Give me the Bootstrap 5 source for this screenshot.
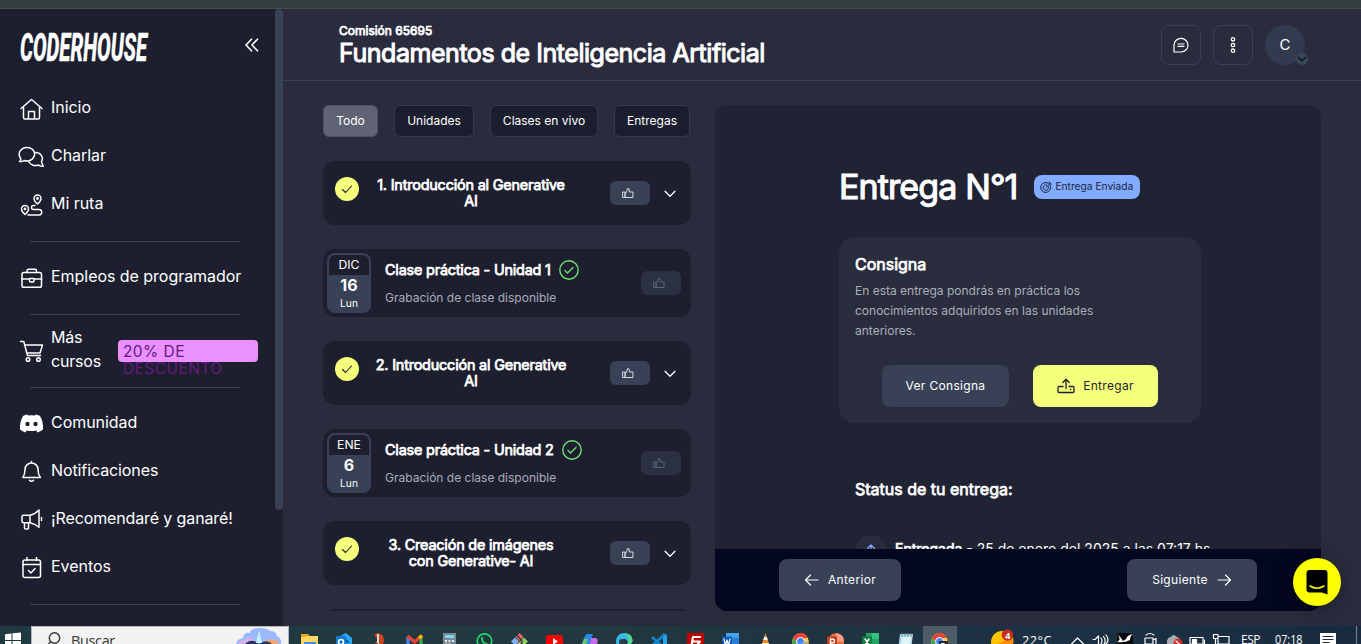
<!DOCTYPE html>
<html lang="es">
<head>
<meta charset="utf-8">
<meta name="viewport" content="width=device-width, initial-scale=1">
<title>Fundamentos de Inteligencia Artificial</title>
<link href="https://cdn.jsdelivr.net/npm/bootstrap@5.3.0/dist/css/bootstrap.min.css" rel="stylesheet">
<style>
:root{--ink:#1d1f2f;--bg:#2a2c3e;--slate:#384156;--lime:#f4ff7b;--line:#34435a}
body{width:1361px;height:644px;overflow:hidden;background:var(--bg);color:#fff;font-family:Inter,"Liberation Sans",sans-serif;font-size:12px}
svg{display:block;flex:none;fill:none;stroke:currentColor;stroke-linecap:round;stroke-linejoin:round}
svg[stroke="none"]{stroke:none}
svg[stroke-linecap="butt"]{stroke-linecap:butt}
.topstrip{height:9px;background:#363f3f;border-bottom:1px solid #4a4c48}
.app{height:617px}
.side{width:283px;background:var(--ink)}
.side-body{width:275px}
.side-top{height:75px;padding:21px 16px 0 20px}
.side-item{height:48px;padding-left:18px;font-size:16px;line-height:24px}
.side-item svg{margin-top:2px;margin-right:7px}
.side-item span{letter-spacing:-.04px;margin-top:-2px}
.side hr{margin:13px 35px 11px 30px;border:0;height:1px;background:#3a4157;opacity:1}
.scroller{width:8px;height:501px;border-radius:4px;background:#384156}
.promo{width:140px;height:22px;margin-left:17px;margin-top:1px;padding:3px 5px 0;border-radius:4px;background:#ea90ff;color:#64197d;font-size:15.5px;line-height:17px;letter-spacing:.45px}
.fat{font-weight:400;-webkit-text-stroke:.75px currentColor}
.head{height:72px;padding:0 53px 0 56px;border-bottom:1px solid var(--line)}
.head-copy{padding-top:15px}
.head-copy p{font-size:12px;line-height:14px}
.head-copy h1{font-size:25px;line-height:30px;letter-spacing:-.46px;-webkit-text-stroke-width:1px}
.sqbtn{width:40px;height:40px;border:1px solid var(--line);border-radius:8px}
.avatar-c{width:40px;height:40px;border-radius:50%;background:#323a50;font-size:15px}
.avatar-c i{position:absolute;left:31px;top:28px;width:12px;height:12px;border-radius:50%;background:#384659;color:#10131f}
.content{padding:24px 40px 0}
.left{width:368px;height:506px}
.tab-b{height:32px;border:1px solid #303c52;border-radius:6px;background:#1b1e2e;color:#fff;font-size:12px;padding:0;margin-right:16px}
.tab-b.on{background:#606373;border-color:#4a5468}
.unit{height:64px;border-radius:12px;background:var(--ink);margin-bottom:24px;padding:16px 15px 0 12px;flex:none}
.unit h2{font-size:14.4px;line-height:16px;width:224px;text-align:center;letter-spacing:-.18px}
.okdot{width:24px;height:24px;border-radius:50%;background:var(--lime);color:#1d1f2f}
.thumb{width:40px;height:24px;border-radius:6px;background:var(--slate);color:#d5d8df;padding:6px 0 0 12px}
.thumb.off{background:#2b3042;color:#5d6272}
.chev{margin:13px 0 0 14px}
.lesson{height:68px;border-radius:12px;background:var(--ink);margin-bottom:24px;padding:4px 10px 0 4px;flex:none}
.datebox{width:44px;height:60px;border:2px solid var(--slate);border-radius:8px;background:var(--slate);text-align:center;overflow:hidden}
.datebox b{display:block;height:20px;line-height:20px;background:#1d1f2f;border-radius:6px 6px 0 0;font-weight:400;font-size:12.2px}
.datebox strong{display:block;font-size:16px;line-height:20px;height:22px;font-weight:700}
.datebox em{display:block;font-style:normal;font-size:10.2px;line-height:13px}
.lesson h2{font-size:14.4px;line-height:20px;letter-spacing:-.18px}
.muted{color:#a9adba}
.lesson .muted{line-height:19px}
.panel{width:606px;height:506px;border-radius:12px;background:#202333;overflow:hidden}
.panel-scroll{height:444px;padding:62px 110px 0 124px;overflow:hidden}
.panel-scroll h1{font-size:34px;line-height:40px;letter-spacing:-.88px;-webkit-text-stroke-width:1.1px}
.tag-sent{width:106px;height:24px;border-radius:8px;background:#82acff;color:#1b2140;font-size:10.2px;padding-left:6px}
.brief{height:186px;border-radius:16px;background:#2a2d3d;margin-top:30px;padding:16px;}
.brief h2,.status-t{font-size:16px;line-height:22px}
.brief p{font-size:12px;line-height:20px}
.act{height:42px;border:0;border-radius:8px;background:#384156;color:#fff;font-size:12px;letter-spacing:.32px;padding:0}
.act.lime{background:var(--lime);color:#1d1f2f}
.up{width:32px;height:32px;border-radius:50%;background:#292c3c;color:#8aa8ff}
.foot{height:62px;padding:10px 64px 0;background:#040720}
.chat{position:absolute;left:1293px;top:558px;width:48px;height:48px;border-radius:50%;background:#fbff00;box-shadow:0 1px 6px rgba(0,0,0,.1),0 2px 24px rgba(0,0,0,.25)}
.taskb{height:18px;overflow:hidden;background:linear-gradient(90deg,#1f3a40 0,#22383e 45%,#1d3144 75%,#192c3f 100%);font-family:"Open Sans","Noto Sans",sans-serif}
.winbtn{width:31px}
.searchb{width:258px;height:30px;background:#f2f2f2;border:1px solid #b5b9ba;color:#333;font-size:14.4px}
.tcell{width:35.1px;height:18px;padding:6.5px 0 0 9.5px}
.tcell.on{width:34px;background:#4d5c66;padding-left:8px}
.tray{width:403px}
.tray svg{position:absolute;left:0;top:0}
</style>
</head>
<body class="d-flex flex-column">
<div class="topstrip flex-shrink-0"></div>
<div class="app d-flex flex-shrink-0">
  <aside class="side d-flex flex-shrink-0">
    <div class="side-body overflow-hidden">
      <div class="side-top d-flex justify-content-between">
        <svg width="150" height="40" viewBox="0 0 150 40"><text x="0" y="30.500" textLength="127" lengthAdjust="spacingAndGlyphs" font-family="Roboto" font-weight="800" font-style="italic" font-size="38.500" fill="#fff" stroke="#fff" stroke-width=".4">CODERHOUSE</text></svg>
        <svg class="mt-2" width="14" height="14" viewBox="0 0 14 14" stroke-width="1.6"><path d="M6.500 1.200 1 7l5.500 5.800M12.500 1.200 7 7l5.500 5.800"/></svg>
      </div>
      <div class="side-item d-flex align-items-center"><svg width="26" height="26" viewBox="0 0 26 26" stroke-width="1.500"><path d="M3 12.500 13.500 3.500 24 12.500M5.500 11v10.500q0 1.500 1.500 1.500h13q1.500 0 1.500-1.500V11M10.500 23v-7.500h6V23"/></svg><span>Inicio</span></div>
      <div class="side-item d-flex align-items-center"><svg width="26" height="26" viewBox="0 0 26 26" stroke-width="1.500"><path d="M1.500 17.500c1.500-1 1.500-2 1-3C-1 9 3 3.500 9 3.500s9.500 5.500 6.500 10c-2 3-6 4-9.500 3-1 .8-2.500 1.200-4.500 1zM17.500 8.500c5 0 8.500 4.500 6 9 .3 2 .5 3 2 4.500-2 .5-4 0-5-1-4 1.500-8 0-9.500-3"/></svg><span>Charlar</span></div>
      <div class="side-item d-flex align-items-center"><svg width="26" height="26" viewBox="0 0 26 26" stroke-width="1.400"><path d="M19.500 12s-3.500-3-3.500-5.500a3.500 3.500 0 0 1 7 0c0 2.500-3.500 5.500-3.500 5.500zM7 22.500s-3.500-3-3.500-5.500a3.500 3.500 0 0 1 7 0c0 2.500-3.500 5.500-3.500 5.500zM17 13.500h-1.500a2 2 0 0 0 0 4h5.500a2.700 2.700 0 0 1 0 5.500H10"/><circle cx="19.500" cy="6.500" r=".7"/><circle cx="7" cy="17" r=".7"/></svg><span>Mi ruta</span></div>
      <hr>
      <div class="side-item d-flex align-items-center"><svg width="26" height="26" viewBox="0 0 26 26" stroke-width="1.500"><rect x="4" y="7.500" width="19.500" height="14.800" rx="1.800"/><path d="M9 7.500V5.800q0-1.500 1.500-1.500h6.500q1.500 0 1.500 1.500v1.700M4 14h7.500M16 14h7.500M11.500 13.500h4.500v2.500q0 1-1 1h-2.500q-1 0-1-1z"/></svg><span>Empleos de programador</span></div>
      <hr>
      <div class="side-item d-flex align-items-center"><svg width="26" height="26" viewBox="0 0 26 26" stroke-width="1.500"><path d="M2.500 3.500h3.300l3.700 14h13M7 7h17.500l-2.500 8H9"/><circle cx="10" cy="21.500" r="1.800"/><circle cx="20.500" cy="21.500" r="1.800"/></svg><span style="letter-spacing:-.2px">Más<br>cursos</span><div class="promo">20% DE DESCUENTO</div></div>
      <hr>
      <div class="side-item d-flex align-items-center"><svg width="26" height="26" viewBox="0 0 26 26" stroke="none"><path fill="#fff" fill-rule="evenodd" d="M9.500 3.500 10 4.500q3.500-.6 7 0l.5-1q2.500.4 4.500 1.600 3.500 5.500 3 13.500-2.500 2-5.500 2.800l-1.200-2q-4.800 1.300-9.600 0l-1.200 2Q4.500 20.600 2 18.600 1.500 11 5 5.100q2-1.200 4.500-1.600zM9.500 10.700a2.100 2.300 0 1 0 .01 0zM17.500 10.700a2.100 2.300 0 1 0 .01 0z"/></svg><span>Comunidad</span></div>
      <div class="side-item d-flex align-items-center"><svg width="26" height="26" viewBox="0 0 26 26" stroke-width="1.500"><path d="M13.500 2.500v1.500M4.800 18.500h17.600c-2-2.500-2.400-4-2.400-8a6.500 6.500 0 0 0-13 0c0 4-.4 5.500-2.200 8zM11.500 21.300q2 2 4 0"/></svg><span style="letter-spacing:-.1px">Notificaciones</span></div>
      <div class="side-item d-flex align-items-center"><svg width="26" height="26" viewBox="0 0 26 26" stroke-width="1.500"><path d="M12 8.200H5.500Q4 8.200 4 9.700v4.600q0 1.500 1.500 1.500H12q5 1 9 4.500V3q-4 4.200-9 5.200zM12 8.200v7.600M6.500 15.800V21q0 1 1 1h2q1 0 1-1v-5M23.500 10.500v3"/></svg><span style="letter-spacing:-.12px">¡Recomendaré y ganaré!</span></div>
      <div class="side-item d-flex align-items-center"><svg width="26" height="26" viewBox="0 0 26 26" stroke-width="1.500"><rect x="5" y="5" width="17.500" height="17.500" rx="2"/><path d="M5 9.500h17.500M9 2.500v3M18.500 2.500v3M10.500 15.500l2.500 2.500 4-4.500"/></svg><span>Eventos</span></div>
      <hr>
    </div>
    <div class="scroller"></div>
  </aside>
  <main class="flex-grow-1">
    <header class="head d-flex justify-content-between">
      <div class="head-copy"><p class="fat m-0">Comisión 65695</p><h1 class="fat m-0">Fundamentos de Inteligencia Artificial</h1></div>
      <div class="d-flex pt-3" style="gap:12px;padding-right:3px">
        <div class="sqbtn d-flex align-items-center justify-content-center"><svg width="16" height="16" viewBox="0 0 16 16" stroke-width="1.200"><path d="M1 15V8a7 6.800 0 1 1 7 7zM5 7h6M5 9.300h6"/></svg></div>
        <div class="sqbtn d-flex align-items-center justify-content-center"><svg width="6" height="18" viewBox="0 0 6 18" stroke-width="1.300"><circle cx="3" cy="3.300" r="1.700"/><circle cx="3" cy="9" r="1.700"/><circle cx="3" cy="14.700" r="1.700"/></svg></div>
        <div class="avatar-c position-relative d-flex align-items-center justify-content-center">C<i><svg width="12" height="12" viewBox="0 0 12 12" stroke-width="1.500"><path d="M2.500 4.500 6 7.800l3.500-3.300"/></svg></i></div>
      </div>
    </header>
    <div class="content d-flex justify-content-between">
      <section class="left d-flex flex-column overflow-hidden">
        <div class="d-flex mb-4 flex-shrink-0">
          <button class="tab-b on" style="width:55px">Todo</button><button class="tab-b" style="width:80px">Unidades</button><button class="tab-b" style="width:108px">Clases en vivo</button><button class="tab-b m-0" style="width:76px">Entregas</button>
        </div>
        <article class="unit d-flex"><div class="okdot d-flex align-items-center justify-content-center"><svg width="12" height="10" viewBox="0 0 12 10" stroke-width="1.100"><path d="M1.500 5.500 4.500 8.500 10.500 2"/></svg></div><h2 class="fat m-0">1. Introducción al Generative<br>AI</h2><div class="thumb mt-1 ms-auto"><svg width="12" height="12" viewBox="0 0 12 12" stroke-width="1"><path d="M1 5h2v5.500H1zM3.500 5.500h1L5.500 1.500q1.800-.3 1.800 1.500v2h3.700V10.500H3.500z"/></svg></div><svg class="chev" width="12" height="8" viewBox="0 0 12 8" stroke-width="1.300"><path d="M1 1.200l5 5L11 1.200"/></svg></article>
        <article class="lesson d-flex"><div class="datebox"><b>DIC</b><strong>16</strong><em>Lun</em></div><div style="margin:7px 0 0 14px"><h2 class="fat m-0 d-flex align-items-center">Clase práctica - Unidad 1<svg style="margin-left:8px;color:#6de06f" width="20" height="20" viewBox="0 0 20 20" stroke-width="1.400"><circle cx="10" cy="10" r="9.200"/><path d="M6 10.500 8.500 13 14 7.500"/></svg></h2><div class="muted mt-2">Grabación de clase disponible</div></div><div class="thumb off ms-auto" style="margin-top:18px"><svg width="12" height="12" viewBox="0 0 12 12" stroke-width="1"><path d="M1 5h2v5.500H1zM3.500 5.500h1L5.500 1.500q1.800-.3 1.800 1.500v2h3.700V10.500H3.500z"/></svg></div></article>
        <article class="unit d-flex"><div class="okdot d-flex align-items-center justify-content-center"><svg width="12" height="10" viewBox="0 0 12 10" stroke-width="1.100"><path d="M1.500 5.500 4.500 8.500 10.500 2"/></svg></div><h2 class="fat m-0">2. Introducción al Generative<br>AI</h2><div class="thumb mt-1 ms-auto"><svg width="12" height="12" viewBox="0 0 12 12" stroke-width="1"><path d="M1 5h2v5.500H1zM3.500 5.500h1L5.500 1.500q1.800-.3 1.800 1.500v2h3.700V10.500H3.500z"/></svg></div><svg class="chev" width="12" height="8" viewBox="0 0 12 8" stroke-width="1.300"><path d="M1 1.200l5 5L11 1.200"/></svg></article>
        <article class="lesson d-flex"><div class="datebox"><b>ENE</b><strong>6</strong><em>Lun</em></div><div style="margin:7px 0 0 14px"><h2 class="fat m-0 d-flex align-items-center">Clase práctica - Unidad 2<svg style="margin-left:8px;color:#6de06f" width="20" height="20" viewBox="0 0 20 20" stroke-width="1.400"><circle cx="10" cy="10" r="9.200"/><path d="M6 10.500 8.500 13 14 7.500"/></svg></h2><div class="muted mt-2">Grabación de clase disponible</div></div><div class="thumb off ms-auto" style="margin-top:18px"><svg width="12" height="12" viewBox="0 0 12 12" stroke-width="1"><path d="M1 5h2v5.500H1zM3.500 5.500h1L5.500 1.500q1.800-.3 1.800 1.500v2h3.700V10.500H3.500z"/></svg></div></article>
        <article class="unit d-flex"><div class="okdot d-flex align-items-center justify-content-center"><svg width="12" height="10" viewBox="0 0 12 10" stroke-width="1.100"><path d="M1.500 5.500 4.500 8.500 10.500 2"/></svg></div><h2 class="fat m-0">3. Creación de imágenes<br>con Generative- AI</h2><div class="thumb mt-1 ms-auto"><svg width="12" height="12" viewBox="0 0 12 12" stroke-width="1"><path d="M1 5h2v5.500H1zM3.500 5.500h1L5.500 1.500q1.800-.3 1.800 1.500v2h3.700V10.500H3.500z"/></svg></div><svg class="chev" width="12" height="8" viewBox="0 0 12 8" stroke-width="1.300"><path d="M1 1.200l5 5L11 1.200"/></svg></article>
        <article class="lesson"></article>
      </section>
      <section class="panel">
        <div class="panel-scroll">
          <div class="d-flex align-items-center"><h1 class="fat m-0">Entrega N°1</h1><div class="tag-sent d-flex align-items-center" style="margin-left:17px"><svg width="12" height="12" viewBox="0 0 12 12" stroke-width="1" style="margin-right:3px"><path d="M10.300 4.500A5 5 0 1 1 8 2M8.300 5.500A2.700 2.700 0 1 1 6.700 4M6 6.500 10 2.500M9.300 1v2h2"/></svg>Entrega Enviada</div></div>
          <div class="brief" style="width:362px"><h2 class="fat m-0">Consigna</h2><p class="muted m-0" style="padding-top:6px">En esta entrega pondrás en práctica los<br>conocimientos adquiridos en las unidades<br>anteriores.</p>
            <div class="d-flex" style="gap:24px;margin:24px 0 0 27px"><button class="act" style="width:127px">Ver Consigna</button><button class="act lime d-flex align-items-center justify-content-center" style="width:125px"><svg width="18" height="16" viewBox="0 0 18 16" stroke-width="1.300" style="margin-right:8px"><path d="M9 10.500V1.500M5.800 4.500 9 1.300l3.200 3.200M6 8.500H2q-1 0-1 1v4q0 1 1 1h14q1 0 1-1v-4q0-1-1-1h-4M13.500 11.500h.3"/></svg>Entregar</button></div></div>
          <h2 class="status-t fat" style="margin:55px 0 0 16px">Status de tu entrega:</h2>
          <div class="d-flex" style="margin:35px 0 0 16px"><div class="up d-flex justify-content-center"><svg style="margin-top:9px" width="10" height="12" viewBox="0 0 10 12" stroke-width="1.200"><path d="M5 11V1M1.500 4.500 5 1l3.500 3.500"/></svg></div><div class="text-nowrap" style="margin:4px 0 0 8px;font-size:14px;line-height:20px"><span class="fat">Entregada</span> - 25 de enero del 2025 a las 07:17 hs</div></div>
        </div>
        <div class="foot d-flex justify-content-between">
          <button class="act d-flex align-items-center justify-content-center" style="width:122px"><svg style="margin-right:9px" width="15" height="14" viewBox="0 0 15 14" stroke-width="1.200"><path d="M14 7H1.500M6.500 2 1.500 7l5 5"/></svg>Anterior</button>
          <button class="act d-flex align-items-center justify-content-center" style="width:130px"><span>Siguiente</span><svg style="margin-left:9px" width="15" height="14" viewBox="0 0 15 14" stroke-width="1.200"><path d="M1 7h12.500M8.500 2l5 5-5 5"/></svg></button>
        </div>
      </section>
    </div>
  </main>
</div>
<div class="chat"><svg width="48" height="48" viewBox="0 0 48 48" stroke="none"><path fill="#000" d="M16.500 12h15q3 0 3 3v21.500l-5.500-2h-12.500q-3 0-3-3V15q0-3 3-3z"/><path fill="none" stroke="#fbff00" stroke-width="1.500" d="M17 28q7 4.500 14 0"/></svg></div>
<footer class="taskb d-flex flex-shrink-0">
  <div class="winbtn flex-shrink-0"><svg width="31" height="18" viewBox="0 0 31 18" stroke="none" fill="#fff"><path fill="#fff" d="M5 8.300 11.500 7.500V14H5zM12.500 7.300 21 6.500V14h-8.500zM5 15h6.500v3H5zM12.500 15H21v3h-8.500z"/></svg></div>
  <div class="searchb d-flex flex-shrink-0"><svg width="39" height="18" viewBox="0 0 39 18" stroke-width="1.400"><circle cx="22.500" cy="11" r="5.200"/><path d="M18.500 15 16 18"/></svg><span style="line-height:20px;padding-top:4px;letter-spacing:-.3px;width:165px">Buscar</span>
    <svg width="48" height="18" viewBox="0 0 48 18" stroke="none"><path fill="#9ab9ff" d="M0 18q0-6 7-7 1-6 7-5 0-5 9-5 8 0 11 3 6 0 7 5 5 2 4 9z"/><path fill="#d7b1e9" d="M1 18q2-5 8-5 2-4 7-2l7 7z"/><path fill="#f5a66f" d="M26 18q5-9 15-4l3 4z"/><path fill="#263660" d="M8 18q7-8 15-1 8-6 14 1z"/><path fill="#c7f3ff" d="M23 3l3 13h-6z"/></svg></div>
  <div class="d-flex flex-shrink-0" style="margin-left:2px">
    <div class="tcell"><svg width="17" height="17" viewBox="0 0 17 17" stroke="none"><path fill="#e8a317" d="M0 1h7l2 2v3H0z"/><path fill="#ffd661" d="M0 4 8 3h9v14H0z"/><path fill="#3b90dc" d="M3 9h12v8H3z"/></svg></div>
    <div class="tcell"><svg width="17" height="17" viewBox="0 0 17 17" stroke="none"><path fill="#2da8ef" d="M4 3 10 0l6 5v12H4z"/><path fill="#0f5fae" d="m8 3 6 7H6z"/><rect width="10" height="14" y="3" rx="1" fill="#1179cf"/><circle cx="5" cy="9" r="2.500" stroke="#fff" stroke-width="1.600"/></svg></div>
    <div class="tcell"><svg width="17" height="17" viewBox="0 0 17 17" stroke="none"><path fill="#d5451b" d="M4 1q5-2 8 2 2 5-1 10H7q4-8-3-9z"/><path fill="#d5d9dc" d="M6 1h2v11l-3 2-2-2 3-3z"/><path fill="#8e2a15" d="M3 10h4v7H3z"/></svg></div>
    <div class="tcell"><svg width="17" height="17" viewBox="0 0 17 17" stroke-width="3.400" stroke-linecap="butt"><path stroke="#4285f4" d="M2 4v13"/><path stroke="#34a853" d="M15 4v13"/><path stroke="#ea4335" d="M1.500 3 8.500 9l7-6"/><path stroke="#fbbc04" d="m13 5 3-2.500"/></svg></div>
    <div class="tcell"><svg width="17" height="17" viewBox="0 0 17 17" stroke="none"><path fill="#7d8990" d="M2 0h13v17H2z"/><path fill="#79d9f5" d="M4 2h9v3H4z"/><path fill="#e5e9eb" d="M4 7h2v2H4zM7.500 7h2v2h-2zM11 7h2v2h-2zM4 10.500h2v2H4zM7.500 10.500h2v2h-2z"/><path fill="#217dbe" d="M11 10h2v5h-2z"/></svg></div>
    <div class="tcell"><svg width="17" height="17" viewBox="0 0 17 17"><circle cx="8.500" cy="8" r="7.200" stroke="#24d366" stroke-width="1.700"/><path stroke="#24d366" stroke-width="2" d="M6 5q-.5 5 5.500 6.500"/></svg></div>
    <div class="tcell"><svg width="17" height="17" viewBox="0 0 17 17" stroke="none"><path fill="#f16a68" d="m8.500 0 4 4-4 4-4-4z"/><path fill="#83aef6" d="m4 4.500 4 4-4 4-4-4z"/><path fill="#8fcf60" d="m13 4.500 4 4-4 4-4-4z"/><path fill="#f5c85e" d="m8.500 9 4 4-4 4-4-4z"/><path stroke="#28333b" stroke-width="1.200" d="m6 2 5 6v5"/></svg></div>
    <div class="tcell"><svg width="17" height="17" viewBox="0 0 17 17" stroke="none"><rect y="2" width="17" height="13" rx="3" fill="#f00"/><path fill="#fff" d="m7 5 5 3.500L7 12z"/></svg></div>
    <div class="tcell"><svg width="17" height="17" viewBox="0 0 17 17" stroke="none"><path fill="#2687e8" d="M4 3q1-3 4-2h4l-5 15H3q-4 0-2-6z"/><path fill="#6ac56b" d="M3 6h4l-3 9H1q-1-3 2-9z"/><path fill="#c66bf0" d="M10 5h4q4 0 2 6l-2 5H8z"/><path fill="#f08b68" d="M8 13h6l-1 4H7z"/></svg></div>
    <div class="tcell"><svg width="17" height="17" viewBox="0 0 17 17" stroke="none"><path fill="#35b7e9" d="M0 8q1-8 8-8 9 1 8.500 8-1 4-5 3 1-4-3-5-5 0-5 6l1 5Q0 14 0 8z"/><path fill="#58d68a" d="M8 0q9 1 8.500 8-1 4-5 3Q15 5 8 0z"/><circle cx="6" cy="9" r="3" fill="#2b3d48"/><path fill="#c6d0d5" d="M2 17q1-6 8-3v3z"/></svg></div>
    <div class="tcell"><svg width="17" height="17" viewBox="0 0 17 17" stroke="none"><path fill="#27a2ef" d="m12 0 4 2v13l-4 2z"/><path stroke="#1687ce" stroke-width="2.800" d="M13 2 2 12M2 5l11 10"/></svg></div>
    <div class="tcell"><svg width="17" height="17" viewBox="0 0 17 17"><path stroke="none" fill="#bf0000" d="M0 0h17v17H0z"/><path stroke="#fff" stroke-width="2.200" stroke-linecap="butt" d="M4 15 6 4h8M5 8.500h8l-5 6h6"/></svg></div>
    <div class="tcell"><svg width="17" height="17" viewBox="0 0 17 17" stroke="none"><path fill="#41a5ee" d="M4 0h13v5H4z"/><path fill="#2b7cd3" d="M4 5h13v12H4z"/><path fill="#185abd" d="M0 3.500h10v11H0z"/><path stroke="#fff" stroke-width="1.200" d="m2 6 1.500 6L5 7l1.500 5L8 6"/></svg></div>
    <div class="tcell"><svg width="17" height="17" viewBox="0 0 17 17" stroke="none"><path fill="#f08a22" d="m8.500 0 5 15h-10z"/><path fill="#eee" d="M7.200 4h2.600l1 3H6.200zM5.200 10h6.600l1 3H4.200z"/></svg></div>
    <div class="tcell"><svg width="17" height="17" viewBox="0 0 17 17" stroke="none"><circle cx="8.500" cy="8.500" r="8.300" fill="#ffcd40"/><path fill="#ea4335" d="M1 5q3-5 7.500-5T16 5H8.500L5 10z"/><path fill="#34a853" d="m1 5 5 7 2 5Q-2 15 1 5z"/><circle cx="8.500" cy="8.500" r="4" fill="#4285f4" stroke="#fff" stroke-width="1"/><circle cx="13" cy="12" r="3.500" fill="#a5a8ad"/></svg></div>
    <div class="tcell"><svg width="17" height="17" viewBox="0 0 17 17" stroke="none"><circle cx="9" cy="8.500" r="8.200" fill="#ed6c47"/><path fill="#ff9f83" d="M9 0q8 1 8 8.500H9z"/><path fill="#c43e1c" d="M0 3.500h10v11H0z"/><path stroke="#fff" stroke-width="1.400" d="M3.500 12.500V6H5q2.500 0 2.500 2T5 10H3.500"/></svg></div>
    <div class="tcell"><svg width="17" height="17" viewBox="0 0 17 17" stroke="none"><path fill="#21a366" d="M4 0h13v17H4z"/><path fill="#33c481" d="M10 0h7v6h-7z"/><path fill="#107c41" d="M0 3.500h10v11H0z"/><path stroke="#fff" stroke-width="1.500" d="m3 6 4 6M7 6l-4 6"/></svg></div>
    <div class="tcell"><svg width="17" height="17" viewBox="0 0 17 17" stroke="none"><path fill="#a9dbe8" d="M3 1h13l-2 16H1z"/><path fill="#dff4f8" d="M5 4h9l-1 13H3z"/><path stroke="#6a8088" stroke-width="1" d="M5 0v3M8 0v3M11 0v3M14 0v3"/></svg></div>
    <div class="tcell on"><svg width="17" height="17" viewBox="0 0 17 17" stroke="none"><circle cx="8.500" cy="8.500" r="8.300" fill="#ffcd40"/><path fill="#ea4335" d="M1 5q3-5 7.500-5T16 5H8.500L5 10z"/><path fill="#34a853" d="m1 5 5 7 2 5Q-2 15 1 5z"/><circle cx="8.500" cy="8.500" r="4" fill="#4285f4" stroke="#fff" stroke-width="1"/><path fill="#25282c" d="M8 8h9v9H8z"/><path stroke="#fff" stroke-width="1.200" d="M10.500 15v-4.500h2q2 .5 2 3"/></svg></div>
  </div>
  <div class="tray position-relative ms-auto flex-shrink-0"><svg width="403" height="18" viewBox="958 626 403 18" font-family="Open Sans, Noto Sans, sans-serif"><g stroke="none" fill="#fff"><circle cx="1002" cy="642" r="11" fill="#ffc400"/><path fill="#ff8d00" d="M992 644q12 1 18-10 5 4 3 10z"/><circle cx="1007.500" cy="635" r="5.800" fill="#c42b1c"/><text x="1005" y="638.500" font-size="9.500" font-weight="700" textLength="5.500">4</text><text x="1022" y="645" font-size="12.800" textLength="29.500">22°C</text><text x="1241" y="644" font-size="12" textLength="19.500">ESP</text><text x="1275" y="644" font-size="12" textLength="27.500" lengthAdjust="spacingAndGlyphs">07:18</text><path d="M1117 633h16v11h-16z" fill="#080808"/><path d="M1117 634q4 3 6 7l3-2q1-4 7-5-3 2-3 6-5 3-13 2 5-3 0-8z"/><path d="M1167 641q1-4 4-4 2-4 6 0 4 1 4 7h-14z" fill="#a8adb2"/><circle cx="1178" cy="643" r="4.500" fill="#d62d2d"/><path d="M1320 633h16v11h-16z"/></g><g stroke="#fff" stroke-width="1.200"><path d="m1071.500 644 6-6 6 6M1093 639.500h2l3.500-3.500v8M1101 638q2 3 0 6M1103.500 636.500q3 4 .5 8M1106 635q4 5 0 9M1146 635q4-3 8 0M1145 638h8v6h-8zM1153 640l3-1.500v5M1190 637.500h13v6.500h-13zM1204.500 640v4M1218 636.500h11v7.500h-11zM1213.500 634.500h4.500v4h-4.500zM1215.500 639v5"/><path d="M1192.500 639.500h4v4h-4z" fill="#fff"/><path stroke="#1c2d3e" d="M1323 636.500h10M1323 639.500h10M1323 642.500h6"/><path stroke="#71818c" d="M1356.500 626v18"/><path d="m1176 641 4 4"/></g></svg></div>
</footer>
<script src="https://cdn.jsdelivr.net/npm/bootstrap@5.3.0/dist/js/bootstrap.bundle.min.js"></script>
</body>
</html>
